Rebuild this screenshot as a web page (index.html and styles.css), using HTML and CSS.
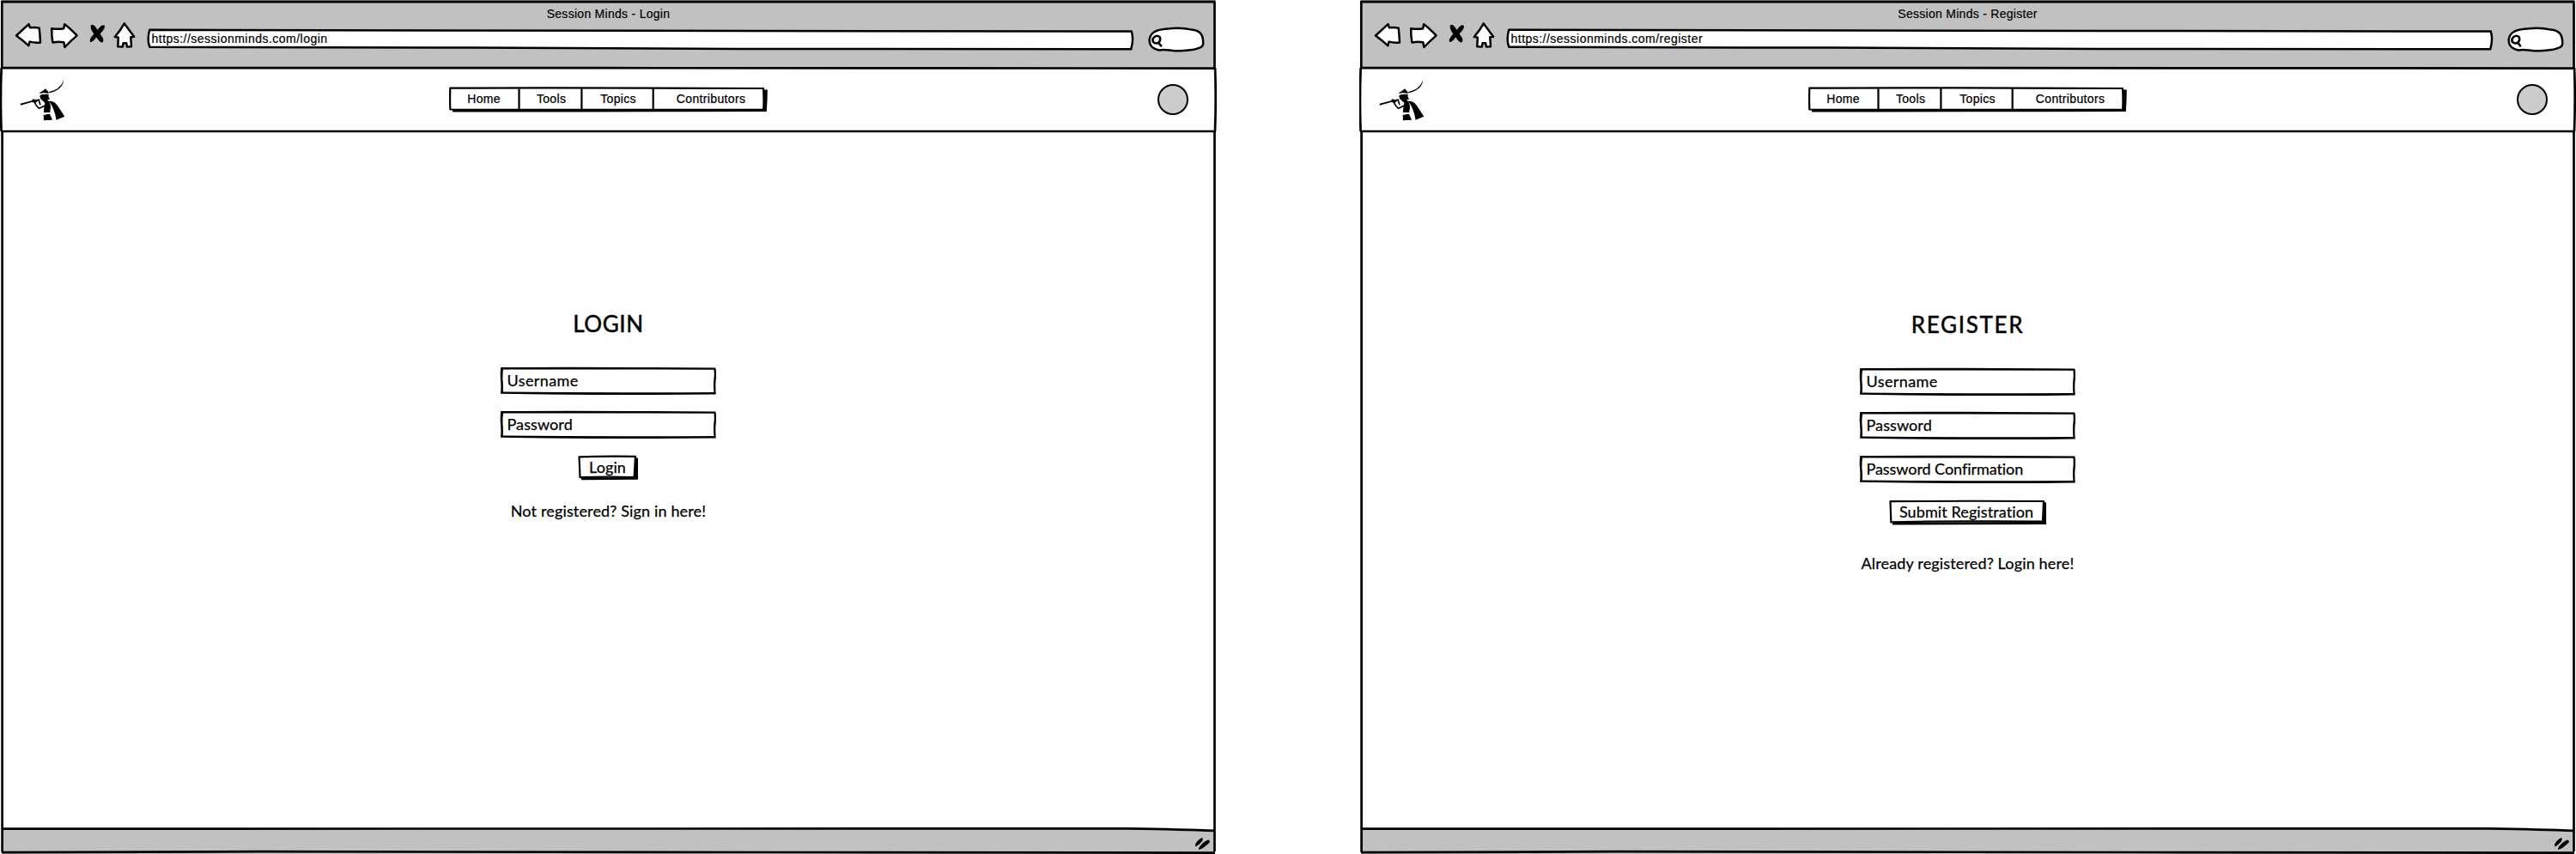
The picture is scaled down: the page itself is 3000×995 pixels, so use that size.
FILE: index.html
```
<!DOCTYPE html>
<html lang="en">
<head>
<meta charset="utf-8">
<title>Session Minds</title>
<link rel="stylesheet" href="styles.css">
</head>
<body>
<svg class="defs" aria-hidden="true">
  <symbol id="back" viewBox="0 0 32 31"><path d="M2 15.5 16.5 2.2 18 6.3 Q24 5.4 28.7 6.6 Q29.6 14 30 23.4 Q24 24.2 17.6 22.6 L16.3 27.2 Q9 20.5 2 15.5Z"/></symbol>
  <symbol id="forward" viewBox="0 0 34 31"><path d="M2.2 7.2 Q10 8.4 16.2 7.2 L17.2 2.3 Q23.5 7 31.6 15.4 Q24 22 17.4 29 L16.3 23.2 Q10 22.3 3.4 23.4 Q2 15 2.2 7.2Z"/></symbol>
  <symbol id="stop" viewBox="0 0 19 23"><path d="M1.8 1.5 Q4-.5 6.8 2.8 L9.6 6.8 12.5 3.2 Q15.6 0 17.8 1.8 Q18.8 5.6 12.6 11.2 L16 16.5 Q17.2 21 14.6 21.8 Q11.5 20.5 8.2 15.6 Q3.5 22 1 20.8 Q-.2 17.5 5.4 11.6 Q1 6 1.8 1.5Z"/></symbol>
  <symbol id="home" viewBox="0 0 26 32"><path d="M12.8 2.4 24.2 17.7 20.3 18.3 21 29.2 15.8 29.4 15.2 25.2 11.6 25.2 10.8 29.5 5.3 29.2 5.8 18.4 1.8 18Q8.6 10 12.8 2.4Z"/></symbol>
  <symbol id="addressbar" viewBox="0 0 1152 28"><path d="M4.2 2.8 Q300 3 700 4 T1147.8 4.6 Q1150.6 14 1147.2 25.3 L690 25 Q520 24.4 380 23.6 L4.4 22.8 Q1 15 4.2 2.8Z"/></symbol>
  <symbol id="searchbox" viewBox="0 0 68 31">
    <path d="M14 28.4 C4 27 2.4 20 2.6 16 C4 6 14 4 26 3.2 Q40 1.8 52 4.6 C62 6 65.2 10 65.2 20 C65.6 25 61 26 54 27.8 Q40 30.4 26 28.4 Q18 27.8 14 28.4Z"/>
    <path d="M8.2 13.2 Q11.5 10.4 14.6 13 Q16.2 16.6 13.6 19.4 Q10 21.6 7 19 Q5.2 16 8.2 13.2M13 19.6 16.2 23.4"/>
  </symbol>
  <symbol id="logo" viewBox="70 35 160 150">
    <path d="M171 81 Q211 72 221 45 L224 38.5 Q219 75 172 84Z"/>
    <path d="M138 86 143 81 149 78 160 69 170 80 171 86 Q155 81 138 86Z"/>
    <path d="M142 91 Q156 86 172 89 L170 95 175 106 166 108 170 111 Q182 126 176 148 L176 152 154 153 155 136 158 118 148 109 143 105 140 96Z"/>
    <path d="M153 160 175 157 184 178 154 180Z"/>
    <path d="M171 112 Q191 111 202 128 L227 166 198 178 Q190 133 171 112Z"/>
    <path d="M72 121 112 111 116 105 125 108 138 105 141 109 131 113 127 118 112 116 73 127Z"/>
    <path class="logo-arm" d="M120 114 Q128 130 138 138 L160 127M137 110 142 126"/>
    <path class="logo-belt" d="M154 154 176 154M158 155 159 162"/>
  </symbol>
  <symbol id="grip" viewBox="0 0 18 16"><path d="M1 10 Q1.5 5 8.8 1 Q11 2.6 8.4 5.8 Q5 10 1.5 11.6ZM5 13.6 Q7.5 7.5 15.8 3.4 Q18.4 3.6 17.6 6.4 Q12 12.5 5.4 15Z"/></symbol>
  <symbol id="field" viewBox="0 0 252 33"><path fill-rule="evenodd" d="M1.2 1 Q80 .1 251.3 1.4 Q253 9 251.6 16 Q251 24 251.8 32.4 Q120 34 1 31.8 Q1.8 24 1 16 Q.3 8 1.2 1ZM4 3.6 Q3.2 10 3.5 16 Q4.2 22 3.8 29.6 Q120 30.6 249.4 29.9 Q248.7 24 249.2 16 Q250.2 9 249.4 3.8 Q120 3.2 4 3.6Z"/></symbol>
  <symbol id="frame" viewBox="0 0 1417 995">
    <path class="edge" d="M2 1.2H1415.5"/>
    <path d="M2.3 1V79M1 2.2H1415.5M1414.5 2V79M2 79 Q500 78.6 700 79.2 L1100 79.4 1415 79.6M1.7 79 Q.2 115 1.6 153M1415.1 79 Q1416.4 115 1415 153M1 153H1416M2.6 153V993M1414.5 153V992M2 965.6 1314 965.4 Q1380 966.4 1414.5 968M2 993.2 Q90 992.9 300 992.2 L900 993 1415 993.6"/>
  </symbol>
  <symbol id="navshape" viewBox="0 0 371 30">
    <path d="M4 26V29.5Q120 29.4 369.8 29Q370.8 16 370.8 3.5H366V26Z"/>
    <path class="outline" d="M1.3 1.6 Q120 .9 366 2 Q366.8 14 366.2 26.5 L180 26.9 1.3 26.5 Q.8 14 1.3 1.6ZM81.5 2V26M154.4 2V26M237.7 2V26"/>
  </symbol>
</svg>

<div class="desk">
  <section class="window">
    <header class="chrome">
      <div class="title">Session Minds - Login</div>
      <div class="toolbar">
        <svg class="tool back"><use href="#back"/></svg>
        <svg class="tool forward"><use href="#forward"/></svg>
        <svg class="stop"><use href="#stop"/></svg>
        <svg class="tool house"><use href="#home"/></svg>
        <div class="address"><svg class="shape tool"><use href="#addressbar"/></svg><span>https://sessionminds.com/login</span></div>
        <svg class="tool search"><use href="#searchbox"/></svg>
      </div>
    </header>
    <div class="navbar">
      <svg class="logo"><use href="#logo"/></svg>
      <nav class="menu">
        <svg class="shape"><use href="#navshape"/></svg>
        <a class="m1">Home</a><a class="m2">Tools</a><a class="m3">Topics</a><a class="m4">Contributors</a>
      </nav>
      <div class="avatar"></div>
    </div>
    <main class="page login">
      <h1>LOGIN</h1>
      <div class="field"><svg class="shape"><use href="#field"/></svg><span class="wide">Username</span></div>
      <div class="field"><svg class="shape"><use href="#field"/></svg><span>Password</span></div>
      <div class="button small">
        <svg class="shape" viewBox="0 0 71 30"><path d="M4 27V29.3L70 28.8V3.5H66V26Z"/><path class="outline" d="M1.5 2.3 Q30 1.2 67 1.8 L65.6 26 Q30 25.2 2.5 26.2Z"/></svg>
        <span>Login</span>
      </div>
      <p>Not registered? Sign in here!</p>
    </main>
    <footer class="status"><svg class="grip"><use href="#grip"/></svg></footer>
    <svg class="frame"><use href="#frame"/></svg>
  </section>

  <section class="window">
    <header class="chrome">
      <div class="title">Session Minds - Register</div>
      <div class="toolbar">
        <svg class="tool back"><use href="#back"/></svg>
        <svg class="tool forward"><use href="#forward"/></svg>
        <svg class="stop"><use href="#stop"/></svg>
        <svg class="tool house"><use href="#home"/></svg>
        <div class="address"><svg class="shape tool"><use href="#addressbar"/></svg><span>https://sessionminds.com/register</span></div>
        <svg class="tool search"><use href="#searchbox"/></svg>
      </div>
    </header>
    <div class="navbar">
      <svg class="logo"><use href="#logo"/></svg>
      <nav class="menu">
        <svg class="shape"><use href="#navshape"/></svg>
        <a class="m1">Home</a><a class="m2">Tools</a><a class="m3">Topics</a><a class="m4">Contributors</a>
      </nav>
      <div class="avatar"></div>
    </div>
    <main class="page register">
      <h1>REGISTER</h1>
      <div class="field"><svg class="shape"><use href="#field"/></svg><span class="wide">Username</span></div>
      <div class="field"><svg class="shape"><use href="#field"/></svg><span>Password</span></div>
      <div class="field"><svg class="shape"><use href="#field"/></svg><span class="tight">Password Confirmation</span></div>
      <div class="button large">
        <svg class="shape" viewBox="0 0 184 30"><path d="M4 27V29.5L183 29V3.2H179V26Z"/><path class="outline" d="M1.5 2.2 Q90 1.4 180 2 L179 25.6 Q90 24.8 2.3 26.4Z"/></svg>
        <span>Submit Registration</span>
      </div>
      <p>Already registered? Login here!</p>
    </main>
    <footer class="status"><svg class="grip"><use href="#grip"/></svg></footer>
    <svg class="frame"><use href="#frame"/></svg>
  </section>
</div>
</body>
</html>
```
FILE: styles.css
```
* { box-sizing: border-box; }
body { margin: 0; background: #fff; color: #000; overflow: hidden; }
svg { display: block; flex: none; overflow: visible; }
.defs { position: absolute; width: 0; height: 0; }

.desk { display: flex; gap: 166px; width: 3000px; height: 995px; }
.window {
  position: relative;
  flex: none;
  width: 1417px;
  height: 995px;
  display: flex;
  flex-direction: column;
  background: #fff;
}
.frame { position: absolute; inset: 0; width: 1417px; height: 995px; fill: none; stroke: #000; stroke-width: 2.7; }
.edge { stroke: #8a908a; }
.shape { position: absolute; left: 0; top: 0; width: 100%; height: 100%; fill: #000; }
.outline { fill: #fff; stroke: #000; stroke-width: 2.2; stroke-linejoin: round; }

.chrome {
  height: 79px;
  margin: 0 2px;
  background: #c1c1c1;
  font: 14px "Liberation Sans", Arial, sans-serif;
  -webkit-text-stroke: .2px #000;
}
.title { padding-top: 6px; height: 26px; line-height: 20px; text-align: center; letter-spacing: .28px; }
.toolbar { display: flex; align-items: flex-start; padding-left: 14.5px; }
.tool { fill: #fff; stroke: #000; stroke-width: 2.5; stroke-linejoin: round; stroke-linecap: round; }
.shape.tool { fill: #fff; }
.back { width: 32px; height: 31px; }
.forward { width: 34px; height: 31px; margin-left: 9px; }
.stop { width: 19px; height: 23px; margin: 2px 0 0 12px; }
.house { width: 26px; height: 32px; margin: -1px 0 0 9px; }
.address { position: relative; width: 1152px; height: 28px; margin: 6px 0 0 12px; padding-left: 7px; }
.address span { position: relative; line-height: 26px; letter-spacing: .48px; }
.search { width: 68px; height: 31px; margin: 4px 0 0 14px; }

.navbar { display: flex; align-items: center; height: 75px; }
.logo { width: 53.3px; height: 50px; margin-left: 23.3px; fill: #000; }
.logo-arm { fill: none; stroke: #000; stroke-width: 5; }
.logo-belt { fill: none; stroke: #fff; stroke-width: 2; }
.menu {
  position: relative;
  display: flex;
  width: 371px;
  height: 30px;
  margin: -1px 0 0 446px;
  font: 14px/29px "Liberation Sans", Arial, sans-serif;
  letter-spacing: .35px;
  text-align: center;
  -webkit-text-stroke: .25px #000;
}
.menu a { position: relative; }
.m1 { width: 82px; }
.m2 { width: 73px; padding-left: 2px; }
.m3 { width: 83px; padding-left: 2px; }
.m4 { width: 130px; padding-left: 5px; }
.avatar { width: 36px; height: 36px; margin: -1px 0 0 454px; border: 2.4px solid #000; border-radius: 50%; background: #ccc; }

.page {
  flex: 1;
  display: flex;
  flex-direction: column;
  align-items: center;
  font: 18px Lato, sans-serif;
  letter-spacing: .1px;
  -webkit-text-stroke: .25px #000;
}
.login { padding-top: 203px; }
.register { padding-top: 204px; }
h1 { margin: 0 0 12px; font-size: 26px; font-weight: 400; line-height: 40px; letter-spacing: .6px; -webkit-text-stroke: .5px #000; }
.register h1 { letter-spacing: 1.7px; }
.field { position: relative; width: 252px; height: 33px; margin: 18px 2px 0 0; padding-left: 9px; line-height: 32px; }
.field span, .button span { position: relative; }
.wide { letter-spacing: .4px; }
.tight { letter-spacing: -.06px; }
.button { position: relative; height: 30px; margin-top: 19px; line-height: 28px; text-align: center; }
.small { width: 71px; padding-right: 2px; }
.large { width: 184px; padding-right: 3px; }
p { margin: 23px 0 0; line-height: 24px; letter-spacing: .15px; }
.register p { margin-top: 32px; }

.status { display: flex; justify-content: flex-end; height: 29px; padding: 9px 6px 0 0; margin: 0 2px; background: #c1c1c1; }
.grip { width: 18px; height: 16px; fill: #000; }
```
